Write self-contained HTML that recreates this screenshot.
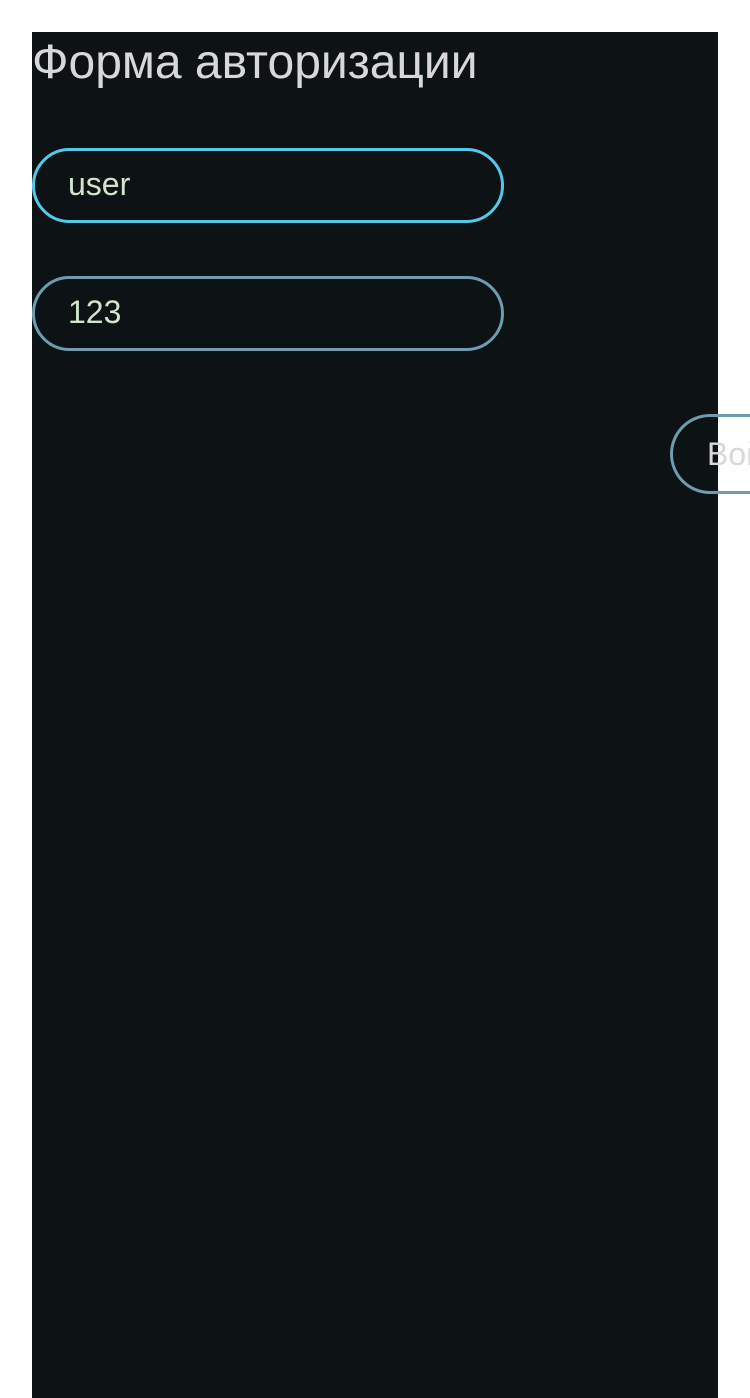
<!DOCTYPE html>
<html><head><meta charset="utf-8"><style>
html,body{margin:0;padding:0;width:750px;height:1398px;overflow:hidden;background:#fff;font-family:"Liberation Sans",sans-serif}
.wrap{position:absolute;left:0;top:0;width:750px;height:1398px;overflow:hidden}
.panel{position:absolute;left:32px;top:32px;width:686px;height:1366px;background:#0d1215}
h1{position:absolute;left:32px;top:34px;margin:0;font-weight:normal;font-size:48px;color:#d8d8d8;line-height:58px;white-space:nowrap}
.inp{position:absolute;left:32px;width:466px;height:69px;border:3px solid;border-radius:38px;color:#cfe6cc;font-size:32px;line-height:66px}
.inp span{position:absolute;left:33px}
.btn{position:absolute;left:670px;top:414px;width:77px;height:74px;border:3px solid #6e9bb0;border-right:none;border-radius:40px 0 0 40px;color:#d9d9d9;font-size:32px;line-height:74px;overflow:hidden;white-space:nowrap}
.btn span{position:absolute;left:34px}
</style></head><body>
<div class="wrap">
<div class="panel"></div>
<h1>Форма авторизации</h1>
<div class="inp" style="top:148px;border-color:#55c8ea"><span>user</span></div>
<div class="inp" style="top:276px;border-color:#6e9bb0"><span>123</span></div>
<div class="btn"><span>Войти</span></div>
</div>
</body></html>
